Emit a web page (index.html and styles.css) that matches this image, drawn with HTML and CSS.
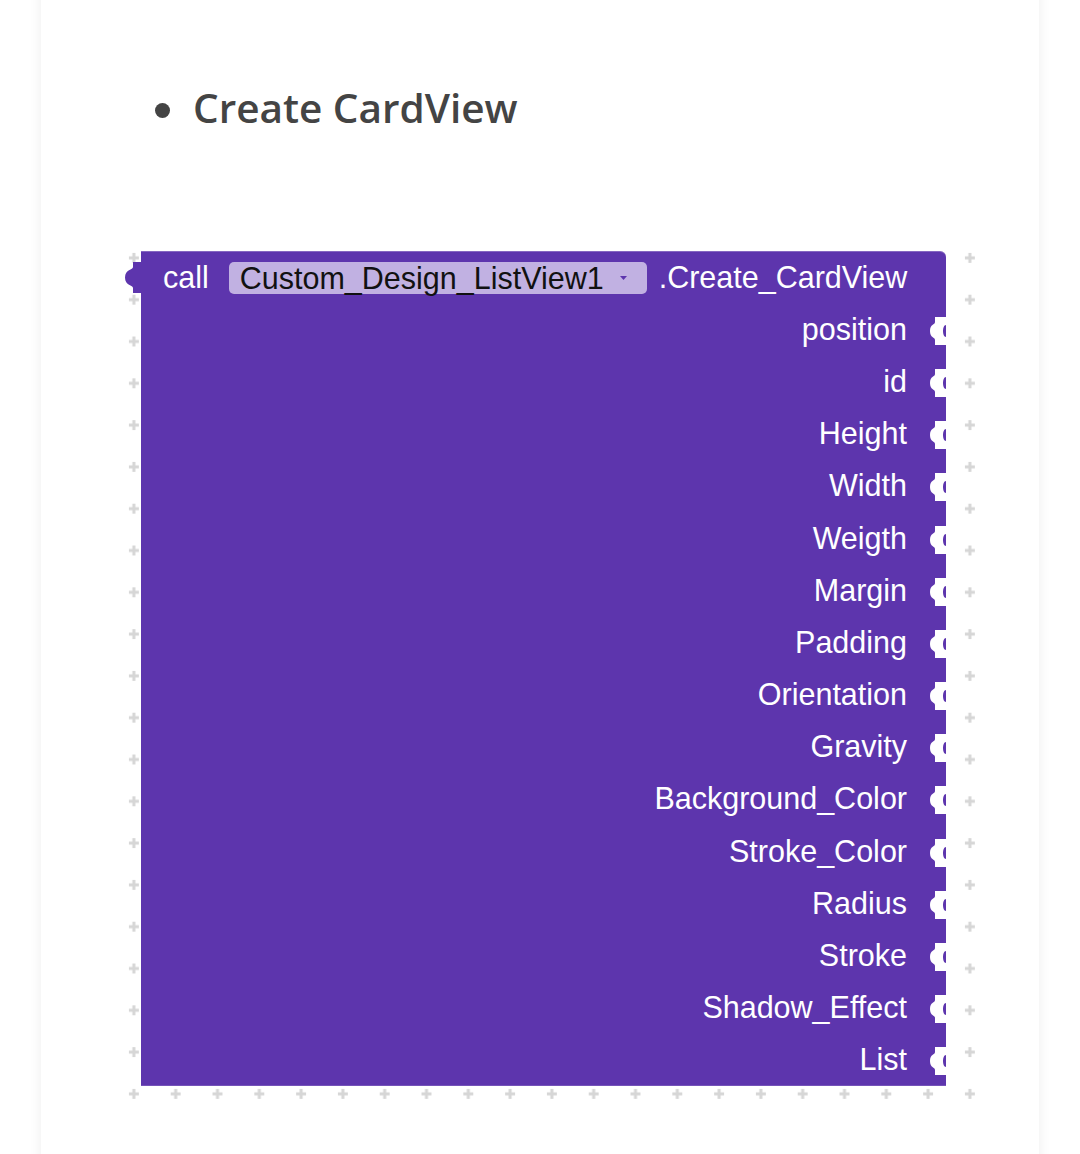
FILE: index.html
```html
<!DOCTYPE html>
<html>
<head>
<meta charset="utf-8">
<link rel="stylesheet" href="styles.css">
</head>
<body>
<div class="card">
  <ul class="bullets"><li>Create CardView</li></ul>
  <div class="workspace">
    <svg class="grid" width="878" height="878" viewBox="0 0 878 878">
      <defs>
        <pattern id="plus" x="0" y="0" width="41.8" height="41.8" patternUnits="userSpaceOnUse">
          <rect x="15.9" y="19.4" width="10" height="3" fill="#d6d6d6"/>
          <rect x="19.4" y="15.9" width="3" height="10" fill="#d6d6d6"/>
        </pattern>
      </defs>
      <rect width="878" height="878" fill="url(#plus)"/>
    </svg>
    <div class="block">
      <svg class="out-tab" width="17" height="31" viewBox="0 0 17 31"><path d="M17,0 H9 V5 C9,8 1,7 1,15.5 C1,24 9,23 9,26 V31 H17 Z" fill="#5d35ad"/></svg>
      <div class="row head">
        <span class="kw">call</span>
        <span class="dropdown"><span>Custom_Design_ListView1</span><svg width="7" height="4" viewBox="0 0 7 4"><path d="M0,0 H7 L3.5,4 Z" fill="#5d35ad"/></svg></span>
        <span class="method">.Create_CardView</span>
      </div>
      <div class="row"><span class="lbl">position</span><svg class="notch" viewBox="0 0 16 30"><path d="M16,1 H5 V6 C5,9 0,8 0,15 C0,22 5,21 5,24 V29 H16 V21 C14,21 13,18 13,15 C13,12 14,9 16,9 Z" fill="#fff"/></svg></div>
      <div class="row"><span class="lbl">id</span><svg class="notch" viewBox="0 0 16 30"><path d="M16,1 H5 V6 C5,9 0,8 0,15 C0,22 5,21 5,24 V29 H16 V21 C14,21 13,18 13,15 C13,12 14,9 16,9 Z" fill="#fff"/></svg></div>
      <div class="row"><span class="lbl">Height</span><svg class="notch" viewBox="0 0 16 30"><path d="M16,1 H5 V6 C5,9 0,8 0,15 C0,22 5,21 5,24 V29 H16 V21 C14,21 13,18 13,15 C13,12 14,9 16,9 Z" fill="#fff"/></svg></div>
      <div class="row"><span class="lbl">Width</span><svg class="notch" viewBox="0 0 16 30"><path d="M16,1 H5 V6 C5,9 0,8 0,15 C0,22 5,21 5,24 V29 H16 V21 C14,21 13,18 13,15 C13,12 14,9 16,9 Z" fill="#fff"/></svg></div>
      <div class="row"><span class="lbl">Weigth</span><svg class="notch" viewBox="0 0 16 30"><path d="M16,1 H5 V6 C5,9 0,8 0,15 C0,22 5,21 5,24 V29 H16 V21 C14,21 13,18 13,15 C13,12 14,9 16,9 Z" fill="#fff"/></svg></div>
      <div class="row"><span class="lbl">Margin</span><svg class="notch" viewBox="0 0 16 30"><path d="M16,1 H5 V6 C5,9 0,8 0,15 C0,22 5,21 5,24 V29 H16 V21 C14,21 13,18 13,15 C13,12 14,9 16,9 Z" fill="#fff"/></svg></div>
      <div class="row"><span class="lbl">Padding</span><svg class="notch" viewBox="0 0 16 30"><path d="M16,1 H5 V6 C5,9 0,8 0,15 C0,22 5,21 5,24 V29 H16 V21 C14,21 13,18 13,15 C13,12 14,9 16,9 Z" fill="#fff"/></svg></div>
      <div class="row"><span class="lbl">Orientation</span><svg class="notch" viewBox="0 0 16 30"><path d="M16,1 H5 V6 C5,9 0,8 0,15 C0,22 5,21 5,24 V29 H16 V21 C14,21 13,18 13,15 C13,12 14,9 16,9 Z" fill="#fff"/></svg></div>
      <div class="row"><span class="lbl">Gravity</span><svg class="notch" viewBox="0 0 16 30"><path d="M16,1 H5 V6 C5,9 0,8 0,15 C0,22 5,21 5,24 V29 H16 V21 C14,21 13,18 13,15 C13,12 14,9 16,9 Z" fill="#fff"/></svg></div>
      <div class="row"><span class="lbl">Background_Color</span><svg class="notch" viewBox="0 0 16 30"><path d="M16,1 H5 V6 C5,9 0,8 0,15 C0,22 5,21 5,24 V29 H16 V21 C14,21 13,18 13,15 C13,12 14,9 16,9 Z" fill="#fff"/></svg></div>
      <div class="row"><span class="lbl">Stroke_Color</span><svg class="notch" viewBox="0 0 16 30"><path d="M16,1 H5 V6 C5,9 0,8 0,15 C0,22 5,21 5,24 V29 H16 V21 C14,21 13,18 13,15 C13,12 14,9 16,9 Z" fill="#fff"/></svg></div>
      <div class="row"><span class="lbl">Radius</span><svg class="notch" viewBox="0 0 16 30"><path d="M16,1 H5 V6 C5,9 0,8 0,15 C0,22 5,21 5,24 V29 H16 V21 C14,21 13,18 13,15 C13,12 14,9 16,9 Z" fill="#fff"/></svg></div>
      <div class="row"><span class="lbl">Stroke</span><svg class="notch" viewBox="0 0 16 30"><path d="M16,1 H5 V6 C5,9 0,8 0,15 C0,22 5,21 5,24 V29 H16 V21 C14,21 13,18 13,15 C13,12 14,9 16,9 Z" fill="#fff"/></svg></div>
      <div class="row"><span class="lbl">Shadow_Effect</span><svg class="notch" viewBox="0 0 16 30"><path d="M16,1 H5 V6 C5,9 0,8 0,15 C0,22 5,21 5,24 V29 H16 V21 C14,21 13,18 13,15 C13,12 14,9 16,9 Z" fill="#fff"/></svg></div>
      <div class="row"><span class="lbl">List</span><svg class="notch" viewBox="0 0 16 30"><path d="M16,1 H5 V6 C5,9 0,8 0,15 C0,22 5,21 5,24 V29 H16 V21 C14,21 13,18 13,15 C13,12 14,9 16,9 Z" fill="#fff"/></svg></div>
    </div>
  </div>
</div>
</body>
</html>
```

FILE: styles.css
```css
html, body {
  margin: 0;
  padding: 0;
  background: #ffffff;
  overflow: hidden;
  height: 100%;
}

.card {
  margin: -20px 0 0 41px;
  width: 998px;
  min-height: 1240px;
  padding-top: 99px;
  box-sizing: border-box;
  background: #ffffff;
  box-shadow: 0 0 12px rgba(0, 0, 0, 0.07);
}

.bullets {
  list-style: none;
  margin: 0;
  padding: 0 0 0 114px;
}

.bullets li {
  display: flex;
  align-items: center;
  font-family: "Open Sans", sans-serif;
  font-weight: 600;
  font-size: 40.5px;
  line-height: 58px;
  height: 58px;
  color: #444444;
}

.bullets li::before {
  content: "";
  width: 15px;
  height: 15px;
  border-radius: 50%;
  background: #444444;
  margin-right: 23px;
  margin-top: 4px;
}

.workspace {
  position: relative;
  width: 878px;
  height: 878px;
  margin: 100px 0 0 72px;
}

.grid {
  position: absolute;
  left: 0;
  top: 0;
}

.block {
  position: relative;
  z-index: 1;
  top: 14px;
  left: 28px;
  width: 805px;
  background: #5d35ad;
  border-top-right-radius: 6px;
  box-shadow: inset 0 1px 0 rgba(255, 255, 255, 0.25), inset 0 -1px 0 rgba(255, 255, 255, 0.15);
  display: flex;
  flex-direction: column;
  font-family: "Liberation Sans", Arial, sans-serif;
  font-size: 30.5px;
  color: #ffffff;
}

.out-tab {
  position: absolute;
  left: -17px;
  top: 11px;
}

.row {
  height: 52.2px;
  display: flex;
  align-items: center;
  justify-content: flex-end;
}

.row.head {
  justify-content: flex-start;
  padding-left: 22px;
}

.kw {
  margin-right: 20px;
}

.dropdown {
  display: inline-flex;
  align-items: center;
  gap: 16px;
  height: 32px;
  padding: 0 20px 0 11px;
  border-radius: 5px;
  background: #c1b1e2;
  color: #111111;
  margin-top: 2px;
}

.method {
  margin-left: 12px;
}

.lbl {
  white-space: nowrap;
}

.notch {
  width: 16px;
  height: 30px;
  margin-left: 23px;
  margin-top: 3px;
  flex-shrink: 0;
}
```
